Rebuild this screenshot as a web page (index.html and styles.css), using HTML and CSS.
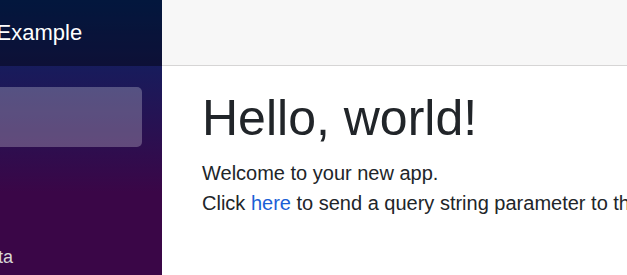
FILE: index.html
```html
<!DOCTYPE html>
<html lang="en">
<head>
  <meta charset="UTF-8">
  <title>Example</title>
  <link rel="stylesheet" href="styles.css">
</head>
<body>
  <div class="sidebar">
    <div class="sidebar-inner">
      <div class="brand-row">
        <a class="brand" href="#">BlazorApp Example</a>
      </div>
      <ul class="nav">
        <li class="nav-item"><a class="nav-link active" href="#"><span class="icon"></span>Home</a></li>
        <li class="nav-item"><a class="nav-link" href="#"><span class="icon"></span>Counter</a></li>
        <li class="nav-item"><a class="nav-link" href="#"><span class="icon"></span>Fetch data</a></li>
      </ul>
    </div>
  </div>
  <div class="main">
    <div class="top-row"></div>
    <article class="content">
      <h1>Hello, world!</h1>
      <div class="line">Welcome to your new app.</div>
      <div class="line">Click <a href="#">here</a> to send a query string parameter to the counter page.</div>
    </article>
  </div>
</body>
</html>
```

FILE: styles.css
```css
html, body {
  margin: 0;
  height: 275px;
  overflow: hidden;
}
body {
  display: flex;
  font-family: "Liberation Sans", Arial, sans-serif;
  color: #212529;
  background: #fff;
}
.sidebar {
  width: 162px;
  flex-shrink: 0;
  overflow: hidden;
  background-image: linear-gradient(180deg, rgb(5, 39, 103) 0%, #3a0647 70%);
}
.sidebar-inner {
  width: 312px;
  margin-left: -150px;
}
.brand-row {
  height: 66px;
  display: flex;
  align-items: center;
  padding-left: 39px;
  background-color: rgba(0, 0, 0, 0.4);
}
.brand {
  color: #fff;
  font-size: 22px;
  text-decoration: none;
  white-space: nowrap;
}
.nav {
  list-style: none;
  margin: 0;
  padding: 21px 20px 0;
}
.nav-item {
  padding-bottom: 10px;
  font-size: 18px;
}
.nav-link {
  display: flex;
  align-items: center;
  height: 60px;
  padding-left: 18px;
  color: #d7d7d7;
  text-decoration: none;
  border-radius: 5px;
  white-space: nowrap;
}
.nav-link.active {
  background-color: rgba(255, 255, 255, 0.25);
  color: #fff;
}
.icon {
  display: inline-block;
  width: 40px;
}
.main {
  flex: 1;
  min-width: 0;
}
.top-row {
  height: 65px;
  background-color: #f7f7f7;
  border-bottom: 1px solid #d6d5d5;
}
.content {
  padding: 22px 30px 0 40px;
  white-space: nowrap;
}
h1 {
  margin: 0 0 10px;
  font-size: 50px;
  font-weight: 500;
  line-height: 1.2;
}
.line {
  font-size: 20px;
  line-height: 30px;
}
a {
  color: #1b5fd6;
  text-decoration: none;
}
```
